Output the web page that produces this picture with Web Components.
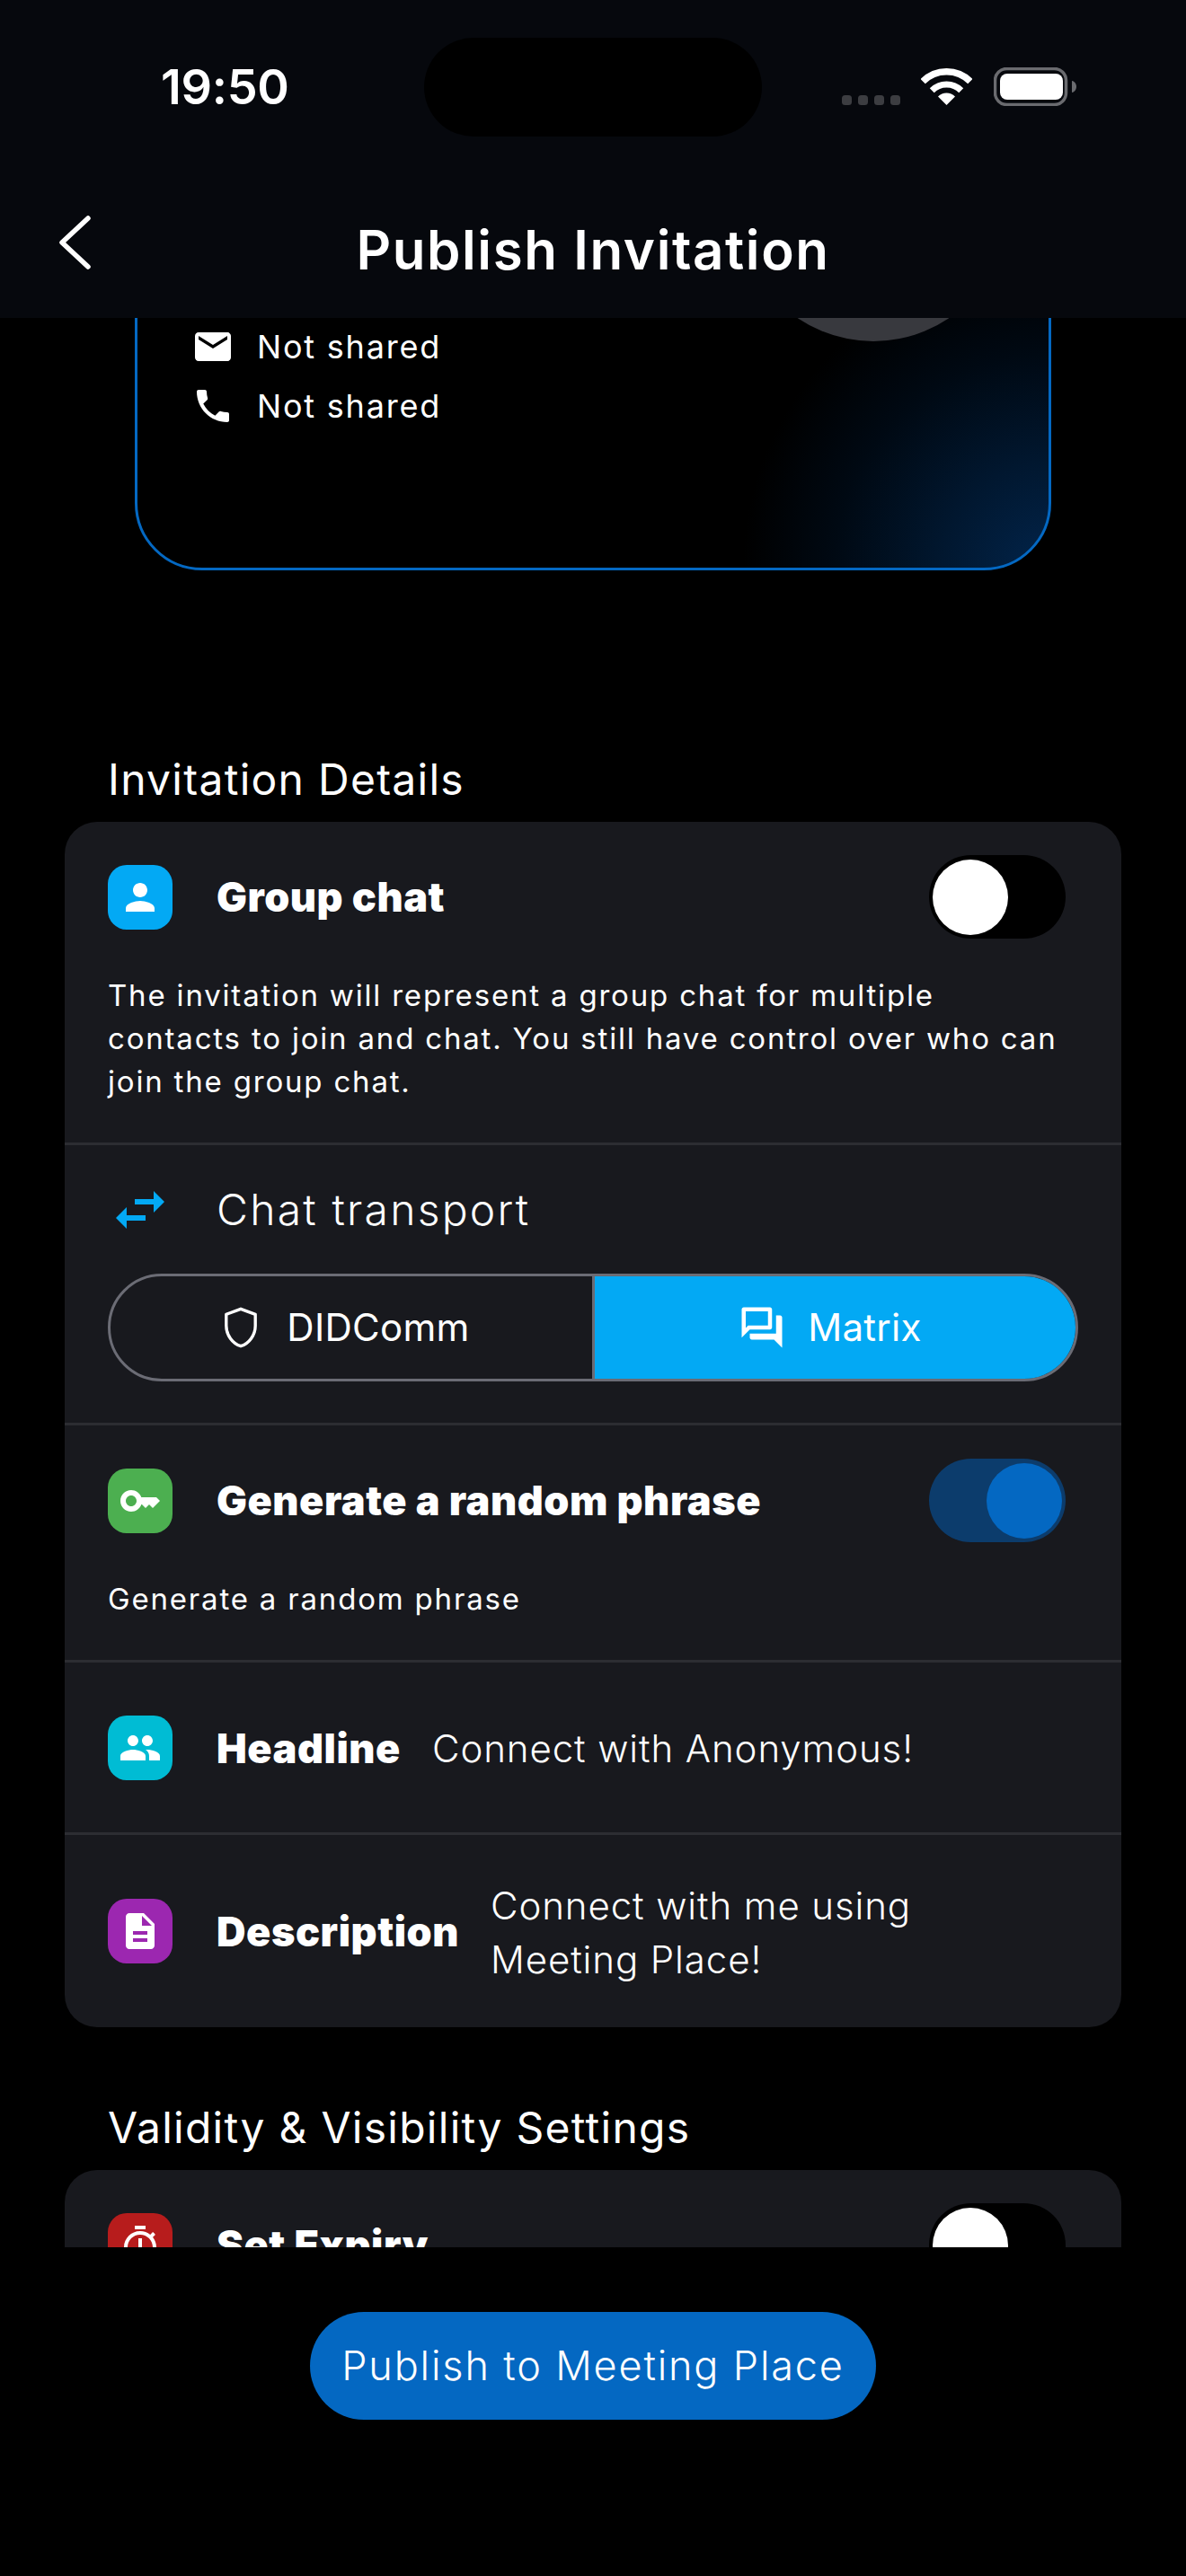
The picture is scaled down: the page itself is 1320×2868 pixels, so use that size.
<!DOCTYPE html>
<html lang="en"><head><meta charset="utf-8"><title>Publish Invitation</title>
<style>html,body{margin:0;padding:0;background:#000;color:#fff;font-family:Inter,"Noto Sans",sans-serif}</style>
</head><body>
<app-shell>
  <status-bar slot="top" time="19:50"></status-bar>
  <nav-bar slot="top" title="Publish Invitation"></nav-bar>
  <profile-card></profile-card>
  <section-title style="margin-top:204px">Invitation Details</section-title>
  <settings-card>
    <setting-row color="#03a9f4" icon="person" label="Group chat" toggle="off" divider>The invitation will represent a group chat for multiple<br>contacts to join and chat. You still have control over who can<br>join the group chat.</setting-row>
    <transport-row divider></transport-row>
    <setting-row color="#4caf50" icon="key" label="Generate a random phrase" toggle="on" divider>Generate a random phrase</setting-row>
    <value-row color="#00bcd4" icon="people" label="Headline" divider>Connect with Anonymous!</value-row>
    <value-row color="#9c27b0" icon="description" label="Description" tall>Connect with me using<br>Meeting Place!</value-row>
  </settings-card>
  <section-title style="margin-top:83px">Validity &amp; Visibility Settings</section-title>
  <settings-card>
    <setting-row color="#b71c1c" icon="timer" label="Set Expiry" toggle="off"></setting-row>
  </settings-card>
  <primary-button slot="footer">Publish to Meeting Place</primary-button>
</app-shell>
<script>
const ICONS={
person:'M12 12c2.21 0 4-1.79 4-4s-1.79-4-4-4-4 1.79-4 4 1.79 4 4 4zm0 2c-2.67 0-8 1.34-8 4v2h16v-2c0-2.66-5.33-4-8-4z',
key:'M21 10h-8.35C11.83 7.67 9.61 6 7 6c-3.31 0-6 2.69-6 6s2.69 6 6 6c2.61 0 4.83-1.67 5.65-4H13l2 2 2-2 2 2 4-4.04L21 10zM7 15c-1.65 0-3-1.35-3-3s1.35-3 3-3 3 1.35 3 3-1.35 3-3 3z',
people:'M16 11c1.66 0 2.99-1.34 2.99-3S17.66 5 16 5c-1.66 0-3 1.34-3 3s1.34 3 3 3zm-8 0c1.66 0 2.99-1.34 2.99-3S9.66 5 8 5C6.34 5 5 6.34 5 8s1.34 3 3 3zm0 2c-2.33 0-7 1.17-7 3.5V19h14v-2.5c0-2.33-4.67-3.5-7-3.5zm8 0c-.29 0-.62.02-.97.05 1.16.84 1.97 1.97 1.97 3.45V19h6v-2.5c0-2.33-4.67-3.5-7-3.5z',
description:'M14 2H6c-1.1 0-1.99.9-1.99 2L4 20c0 1.1.89 2 1.99 2H18c1.1 0 2-.9 2-2V8l-6-6zm2 16H8v-2h8v2zm0-4H8v-2h8v2zm-3-5V3.5L18.5 9H13z',
timer:'M9 1h6v2H9zm10.03 6.39l1.42-1.42c-.43-.51-.9-.99-1.41-1.41l-1.42 1.42C16.07 4.74 14.12 4 12 4c-4.97 0-9 4.03-9 9s4.02 9 9 9 9-4.03 9-9c0-2.12-.74-4.07-1.97-5.61zM12 20c-3.87 0-7-3.13-7-7s3.13-7 7-7 7 3.13 7 7-3.13 7-7 7zM11 8h2v6h-2z',
mail:'M20 4H4c-1.1 0-1.99.9-1.99 2L2 18c0 1.1.9 2 2 2h16c1.1 0 2-.9 2-2V6c0-1.1-.9-2-2-2zm0 4l-8 5-8-5V6l8 5 8-5v2z',
phone:'M6.62 10.79c1.44 2.83 3.76 5.14 6.59 6.59l2.2-2.2c.27-.27.67-.36 1.02-.24 1.12.37 2.33.57 3.57.57.55 0 1 .45 1 1V20c0 .55-.45 1-1 1-9.39 0-17-7.61-17-17 0-.55.45-1 1-1h3.5c.55 0 1 .45 1 1 0 1.25.2 2.45.57 3.57.11.35.03.74-.25 1.02l-2.2 2.2z',
swap:'M6.99 11L3 15l3.99 4v-3H14v-2H6.99v-3zM21 9l-4-4v3h-7v2h7v3l4-4z',
forum:'M15 4v7H5.17L4 12.17V4h11m1-2H3c-.55 0-1 .45-1 1v14l4-4h10c.55 0 1-.45 1-1V3c0-.55-.45-1-1-1zm5 4h-2v9H6v2c0 .55.45 1 1 1h11l4 4V7c0-.55-.45-1-1-1z'
};
const svgIcon=(n,s,c='#fff')=>`<svg width="${s}" height="${s}" viewBox="0 0 24 24" fill="${c}" style="display:block;flex:none"><path d="${ICONS[n]}"/></svg>`;
function def(name,render){customElements.define(name,class extends HTMLElement{connectedCallback(){if(!this.shadowRoot){this.attachShadow({mode:'open'}).innerHTML=render(this)}}})}

def('app-shell',()=>`<style>
:host{display:flex;flex-direction:column;width:1320px;height:2868px;overflow:hidden;background:#000}
header{flex:none;height:354px;background:#06080d;display:flex;flex-direction:column}
main{flex:none;height:2148px;overflow:hidden}
footer{flex:1;display:flex;justify-content:center;align-items:flex-start;padding-top:72px}
</style><header><slot name="top"></slot></header><main><slot></slot></main><footer><slot name="footer"></slot></footer>`);

def('status-bar',h=>`<style>
:host{display:flex;height:152px;position:relative;flex:none}
.time{position:absolute;left:179px;top:61px;font:600 54px/72px Inter,sans-serif;color:#fff;letter-spacing:-.3px}
.island{position:absolute;left:472px;top:42px;width:376px;height:110px;border-radius:55px;background:#000}
.dots{position:absolute;left:937px;top:106px;display:flex;gap:7px}
.dots i{width:11px;height:11px;border-radius:3.5px;background:#3c3d41}
.wifi{position:absolute;left:1025px;top:76px}
.bat{position:absolute;left:1106px;top:75px}
</style><span class="time">${h.getAttribute('time')}</span><div class="island"></div>
<div class="dots"><i></i><i></i><i></i><i></i></div>
<svg class="wifi" width="57" height="41" viewBox="0 0 57 41" fill="none" stroke="#fff"><path stroke-width="7.5" d="M2.16 14.66A37.25 37.25 0 0 1 54.84 14.66"/><path stroke-width="7" d="M12.24 24.74A23 23 0 0 1 44.76 24.74"/><path fill="#fff" stroke="none" d="M28.5 41L19 31.5A13.5 13.5 0 0 1 38 31.5Z"/></svg>
<svg class="bat" width="92" height="43" viewBox="0 0 92 43"><rect x="1.5" y="1.5" width="79" height="40" rx="13" fill="none" stroke="#6a6b6f" stroke-width="3.5"/><rect x="7" y="7" width="70" height="29" rx="8" fill="#fff"/><path d="M87 15c3 .6 5 3.2 5 6.5s-2 5.9-5 6.5z" fill="#6a6b6f"/></svg>`);

def('nav-bar',h=>`<style>
:host{display:flex;height:202px;align-items:flex-start;position:relative;flex:none}
.back{position:absolute;left:64px;top:87px}
h1{margin:0;width:100%;text-align:center;font:600 60px/72px Inter,sans-serif;color:#fff;padding-top:90px;letter-spacing:1.6px}
</style><svg class="back" width="40" height="62" viewBox="0 0 40 62" fill="none" stroke="#fff" stroke-width="5.5" stroke-linecap="round" stroke-linejoin="round"><path d="M34 4L5 31l29 27"/></svg><h1>${h.getAttribute('title')}</h1>`);

def('profile-card',()=>`<style>
:host{display:flex;justify-content:space-between;box-sizing:border-box;width:1020px;height:600px;margin:-319px 0 0 150px;border:3px solid #0468c2;border-radius:75px;padding:42px 45px 0 60px;background:radial-gradient(circle 340px at 100% 100%,#02244a 0%,#01172f 35%,#000913 70%,#000 100%)}
.col{padding-top:282px;display:flex;flex-direction:column;gap:18px}
.row{display:flex;align-items:center;gap:25px;height:48px;font:400 36px/48px Inter,sans-serif;color:#fff;letter-spacing:1.8px}
.av{width:300px;height:300px;border-radius:50%;background:#38393e}
</style><div class="col"><div class="row">${svgIcon('mail',48)}<span>Not shared</span></div><div class="row">${svgIcon('phone',48)}<span>Not shared</span></div></div><div class="av"></div>`);

def('section-title',()=>`<style>:host{display:block;margin-left:120px;height:58px;margin-bottom:18px;font:400 48px/58px Inter,sans-serif;color:#fff;letter-spacing:1.27px}</style><slot></slot>`);

def('settings-card',()=>`<style>:host{display:block;margin:0 72px;background:#18191e;border-radius:36px;overflow:hidden}</style><slot></slot>`);

def('app-icon',h=>`<style>:host{display:flex;flex:none;align-items:center;justify-content:center;width:72px;height:72px;border-radius:21px;background:${h.getAttribute('color')}}</style>${svgIcon(h.getAttribute('icon'),48)}`);

def('toggle-switch',h=>{const on=h.hasAttribute('on');return `<style>
:host{display:block;flex:none;width:152px;height:93px;border-radius:47px;background:${on?'#0c3c6c':'#000'};position:relative}
i{position:absolute;top:4.5px;${on?'right:4px':'left:4px'};width:84px;height:84px;border-radius:50%;background:${on?'#0468c2':'#fff'}}
</style><i></i>`});

def('setting-row',h=>{const t=h.getAttribute('toggle');return `<style>
:host{display:block;padding:37px 48px 44px;${h.hasAttribute('divider')?'border-bottom:3px solid #2c2d32;':''}}
.head{display:flex;align-items:center;gap:49px;height:93px}
.label{font:900 45px/60px Inter,sans-serif;color:#fff;letter-spacing:.55px}
toggle-switch{margin-left:auto;margin-right:14px}
.desc{margin-top:39px;font:400 33px/48px Inter,sans-serif;color:#fff;letter-spacing:1.81px}
</style><div class="head"><app-icon color="${h.getAttribute('color')}" icon="${h.getAttribute('icon')}"></app-icon><span class="label">${h.getAttribute('label')}</span><toggle-switch ${t==='on'?'on':''}></toggle-switch></div><div class="desc"><slot></slot></div>`});

def('value-row',h=>`<style>
:host{display:flex;align-items:center;box-sizing:border-box;height:${h.hasAttribute('tall')?214:192}px;padding:0 48px;gap:35px;${h.hasAttribute('divider')?'border-bottom:3px solid #2c2d32;':''}}
.left{display:flex;align-items:center;gap:49px}
.label{font:900 45px/60px Inter,sans-serif;color:#fff;letter-spacing:.55px;padding-top:2px}
.val{font:300 42px/60px Inter,sans-serif;color:#fff;letter-spacing:.9px;padding-top:3px}
</style><div class="left"><app-icon color="${h.getAttribute('color')}" icon="${h.getAttribute('icon')}"></app-icon><span class="label">${h.getAttribute('label')}</span></div><div class="val"><slot></slot></div>`);

def('transport-row',h=>`<style>
:host{display:block;padding:36px 48px 46px;border-bottom:3px solid #2c2d32}
.head{display:flex;align-items:center;gap:49px;height:72px;font:300 48px/74px Inter,sans-serif;letter-spacing:2.23px;color:#fff}
.ico{width:72px;display:flex;justify-content:center;flex:none}
.seg{display:grid;grid-template-columns:539px 1fr;box-sizing:border-box;height:120px;margin-top:35px;border:3px solid #6b6c75;border-radius:60px;overflow:hidden}
.opt{display:flex;align-items:center;justify-content:center;gap:24px;font:400 42px/54px Inter,sans-serif;letter-spacing:.3px;color:#fff}
.opt.a{border-right:3px solid #6b6c75;padding-right:18px}
.opt.b{background:#03a9f4;padding-right:12px}
</style><div class="head"><span class="ico">${svgIcon('swap',72,'#03a9f4')}</span><span>Chat transport</span></div>
<div class="seg"><div class="opt a"><svg width="54" height="54" viewBox="0 0 24 24" fill="none" stroke="#fff" stroke-width="1.5" stroke-linejoin="round" style="flex:none"><path d="M12 2.8L4.8 5.5V11.1C4.8 15.7 7.9 20 12 21.2 16.1 20 19.2 15.7 19.2 11.1V5.5Z"/></svg><span>DIDComm</span></div><div class="opt b">${svgIcon('forum',54)}<span>Matrix</span></div></div>`);

def('primary-button',()=>`<style>:host{display:flex;align-items:center;justify-content:center;box-sizing:border-box;width:630px;height:120px;border-radius:60px;background:#0468c2;color:#fff;font:300 45px/60px Inter,sans-serif;letter-spacing:1.85px}</style><slot></slot>`);
</script>
</body></html>
